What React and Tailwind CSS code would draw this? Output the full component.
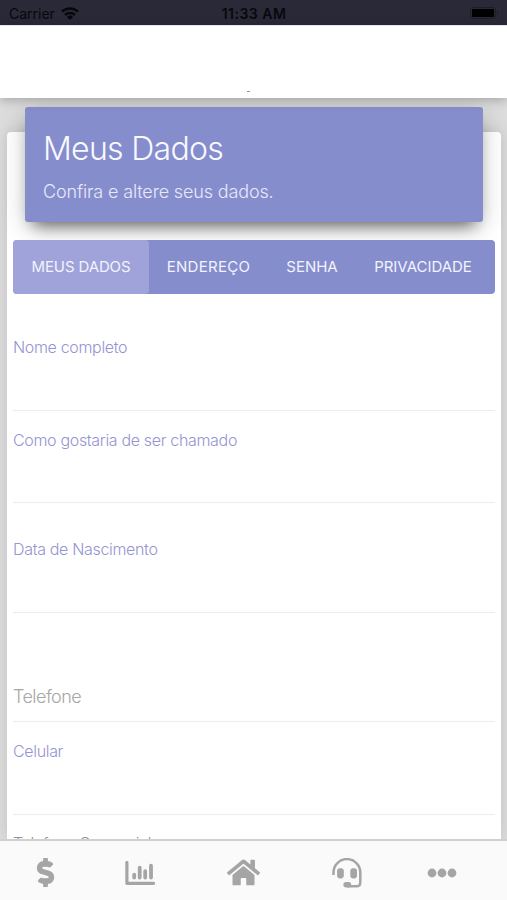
import { FaDollarSign, FaHome } from "react-icons/fa";

const tabs = [
  { label: "MEUS DADOS", className: "w-[136px] rounded bg-[#a0a3d9] -tracking-[0.12px]" },
  { label: "ENDEREÇO", className: "w-[119px] tracking-[0.3px]" },
  { label: "SENHA", className: "w-[88px]" },
  { label: "PRIVACIDADE", className: "w-[134px] -tracking-[0.02px]" },
];

function StatusBar() {
  return (
    <div className="grid h-[25px] shrink-0 grid-cols-3 items-center bg-[#292938] px-[9px] text-[14px] text-[#08080c]">
      <div className="flex items-center gap-[6px] pt-[2px] font-normal">
        <span>Carrier</span>
        <svg width="18" height="13" viewBox="0 0 18 13" fill="none" stroke="currentColor" strokeWidth="2.5">
          <path d="M1 4.7a11.4 11.4 0 0 1 16 0M4 8a7.2 7.2 0 0 1 10 0" />
          <path d="M9 13 5.9 9.9a4.4 4.4 0 0 1 6.2 0Z" fill="currentColor" stroke="none" />
        </svg>
      </div>
      <div className="pt-[2px] pl-px text-center font-semibold tracking-[0.5px]">11:33 AM</div>
      <div className="flex items-center justify-end gap-px pt-[1px]">
        <div className="h-[12px] w-[26px] rounded-[3px] border border-[#1e1e29] p-px">
          <div className="h-full rounded-[1px] bg-black" />
        </div>
        <div className="h-1 w-px bg-[#1e1e29]" />
      </div>
    </div>
  );
}

function Field({ label, className, labelClass = "text-base -tracking-[0.33px] text-[#9595d2]" }) {
  return (
    <div className={`shrink-0 border-b border-[#ececee] ${className}`}>
      <label className={`block leading-6 whitespace-nowrap ${labelClass}`}>{label}</label>
    </div>
  );
}

function ChartIcon() {
  return (
    <svg width="30" height="24" viewBox="0 0 30 24" fill="none" stroke="currentColor" strokeLinecap="round">
      <path d="M1.9 1.5v20.8h26.6" strokeWidth="3.2" strokeLinejoin="round" />
      <path d="M9.2 13.7V16.6M14.7 6.7V16.6M20.2 10.2V16.6M26 4.7V16.6" strokeWidth="3.8" />
    </svg>
  );
}

function HeadsetIcon() {
  return (
    <svg width="30" height="30" viewBox="0 0 30 30" fill="none" stroke="currentColor">
      <path d="M1.5 17v-2.5a13.3 13.3 0 0 1 26.8 0v10q0 3.8-3.8 3.8H15" strokeWidth="2.5" />
      <rect x="5.1" y="10.2" width="6.7" height="10.2" rx="2.8" fill="currentColor" stroke="none" />
      <rect x="18.3" y="10.2" width="6.7" height="10.2" rx="2.8" fill="currentColor" stroke="none" />
      <rect x="11.4" y="24" width="7.8" height="5.5" rx="2.7" fill="currentColor" stroke="none" />
    </svg>
  );
}

function MoreIcon() {
  return (
    <svg width="30" height="10" viewBox="0 0 30 10" fill="currentColor">
      <circle cx="5" cy="5" r="4.4" />
      <circle cx="15" cy="5" r="4.4" />
      <circle cx="25" cy="5" r="4.4" />
    </svg>
  );
}

function BottomNav() {
  return (
    <nav className="z-10 grid h-[61px] shrink-0 grid-cols-[90px_99px_108px_99px_92px] border-t-2 border-[#d0d0d1] bg-[#fafafa] pt-[4px] text-[#a5a5a5]">
      <button className="flex items-center justify-center">
        <FaDollarSign size={29} className="stroke-current stroke-[18]" />
      </button>
      <button className="flex items-center justify-center"><ChartIcon /></button>
      <button className="flex items-center justify-center"><FaHome size={33} /></button>
      <button className="flex items-center justify-center"><HeadsetIcon /></button>
      <button className="flex items-center justify-center"><MoreIcon /></button>
    </nav>
  );
}

export default function App() {
  return (
    <div className="flex h-[900px] w-[507px] flex-col overflow-hidden bg-[#dcdcdc] font-['Inter','Liberation_Sans',sans-serif] font-light">
      <StatusBar />

      <header className="z-10 flex h-[73px] shrink-0 items-end justify-center border-t border-[#e4e4f0] bg-white pb-[6px] shadow-[0_2px_10px_rgba(0,0,0,0.25)]">
        <div className="mr-[11px] h-px w-[3px] bg-[#8a8ad4]" />
      </header>

      <main className="flex min-h-0 flex-1 flex-col overflow-hidden px-[7px] pr-[6px] pt-[34px]">
        <div className="flex min-h-0 flex-1 flex-col rounded-t bg-white px-[6px] shadow-[0_0_14px_rgba(0,0,0,0.12)]">
          <section className="mx-3 -mt-[25px] h-[115px] shrink-0 rounded-[3px] bg-[#868dcc] px-[18px] pt-[21px] shadow-[0_11px_16px_-8px_rgba(0,0,0,0.6),0_4px_26px_rgba(0,0,0,0.16)]">
            <h1 className="text-[32px] leading-[42px] -tracking-[0.7px] text-[#f8f9ff]">Meus Dados</h1>
            <p className="pt-px text-[18px] leading-[42px] -tracking-[0.15px] text-[#e6e9fb]">Confira e altere seus dados.</p>
          </section>

          <div className="mt-[18px] flex h-[54px] shrink-0 overflow-hidden rounded bg-[#868dcc] text-[15px] font-normal text-[#f1f3ff]">
            {tabs.map((tab) => (
              <button key={tab.label} className={`flex items-center justify-center whitespace-nowrap ${tab.className}`}>
                {tab.label}
              </button>
            ))}
          </div>

          <Field label="Nome completo" className="mt-[41px] h-[76px]" />
          <Field label="Como gostaria de ser chamado" className="mt-[17px] h-[75px]" />
          <Field label="Data de Nascimento" className="mt-[34px] h-[76px]" />
          <Field label="Telefone" className="mt-[72px] h-[37px]" labelClass="text-[18px] -tracking-[0.55px] text-[#a6a6a6]" />
          <Field label="Celular" className="mt-[17px] h-[76px]" />
          <Field
            label="Telefone Comercial"
            className="mt-[16px] h-[76px]"
            labelClass="text-base -tracking-[0.33px] text-[#8e8ea8]"
          />
        </div>
      </main>

      <BottomNav />
    </div>
  );
}
